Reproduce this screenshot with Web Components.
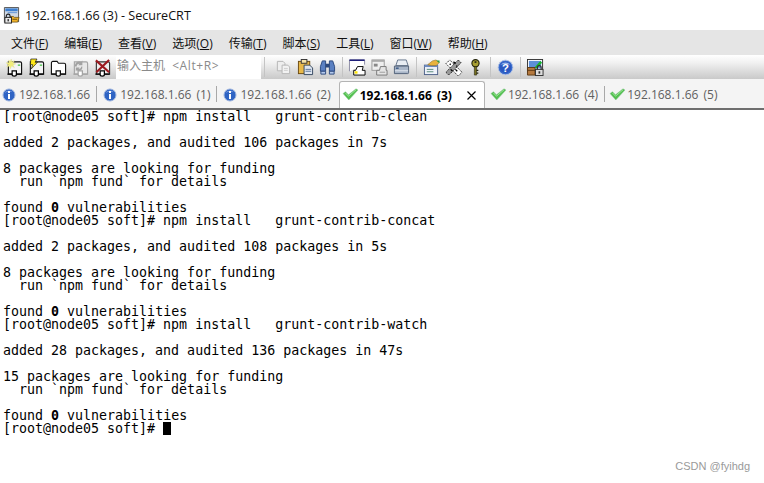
<!DOCTYPE html>
<html lang="zh">
<head>
<meta charset="utf-8">
<title>192.168.1.66 (3) - SecureCRT</title>
<style>
    html, body { margin: 0; padding: 0; height: 100%; background: #fff; overflow: hidden; }
    body { display: flex; flex-direction: column; font-family: "Open Sans", "Noto Sans CJK SC", sans-serif; }
</style>
</head>
<body>
<crt-titlebar>192.168.1.66 (3) - SecureCRT</crt-titlebar>
<crt-menubar></crt-menubar>
<crt-toolbar></crt-toolbar>
<crt-tabbar></crt-tabbar>
<crt-terminal></crt-terminal>
<crt-watermark>CSDN @fyihdg</crt-watermark>

<script>
/**
 * Icon drawings, all on an 18x18 box
 */
const plug = (c = '#000') => `<path d="M1.500 16h15" stroke="${c}" stroke-width="1.300"/><path d="M6.500 12.500h4.500v4a2 1.500 0 0 1-4.500 0z" fill="#fff" stroke="${c}" stroke-width="1.300"/>`;
const body = (c = '#111', f = '#f4f4f4') => `<path d="M2.500 3h12.500a1.500 1.500 0 0 1 1.500 1.500v11.500h-14z" fill="${f}" stroke="${c}" stroke-width="1.200"/>`;
const Icons = {
    newSession: `${body()}${plug()}
        <path d="M5.500 0l.8 3 2.700-1.500L7.500 4.500l3 .6-3 1.200 1.500 3-3-1.800L4.500 10.500l-.7-3L.5 8.500l2-2.300L0 4l3.200-.2L2.500 1l2 1.500z" fill="#f2ee7a" stroke="#d8d6a0" stroke-width=".3"/>
        <path d="M12.500 6.500h2.500" stroke="#3fbf3f" stroke-width="1.300"/>`,
    quickConnect: `${body()}${plug()}
        <path d="M3 0h6.500L7.500 3.500H10L3.500 10.500l1.500-4.500H2.500z" fill="#ffe81a" stroke="#111" stroke-width=".7"/>
        <path d="M12.500 6.500h2.500" stroke="#3fbf3f" stroke-width="1.300"/>`,
    folder: `<path d="M1.500 16V4a1.500 1.500 0 0 1 1.500-1.500h4.500l1.500 2h6a1.500 1.500 0 0 1 1.500 1.500v10z" fill="#fff" stroke="#111" stroke-width="1.200"/>${plug('#111')}`,
    reconnect: `${body('#a4a4a4', '#e8e8e8')}${plug('#a4a4a4')}
        <path d="M3 8a5 5 0 0 1 7-5l1-1.500v5H6.500L8 5a3 3 0 0 0-3 3zM11 8a4 4 0 0 1-6 4l-1 1V9h4l-1 1.500a3 3 0 0 0 3-2.500z" fill="#a2a2a2"/>`,
    disconnect: `${body('#333', '#eee')}${plug()}
        <path d="M2 1.500l14 12.500M16 1L2.500 14" stroke="#9c1a20" stroke-width="2.300"/>`,
    copy: `<path d="M2.500 2.500h6l2 2v8h-8z" fill="#eee" stroke="#b5b5b5"/><path d="M7.500 6.500h6l2 2v7h-8z" fill="#f2f2f2" stroke="#b5b5b5"/>
        <path d="M9.500 10h4M9.500 12h4" stroke="#ccc"/>`,
    paste: `<rect x="1.500" y="2.500" width="12" height="13" fill="#e9b949" stroke="#6b4a10"/><rect x="4.500" y=".5" width="6" height="4" fill="#f6e4a8" stroke="#333"/>
        <path d="M7.500 6.500h6l3 3v7h-9z" fill="#dfe6f0" stroke="#33465f"/><path d="M9 11h6M9 13h6" stroke="#5a7599"/>`,
    find: `<path d="M3.500 2h3.500v11H1.500v-5z" fill="#5a80c2" stroke="#2b477c"/><path d="M14.500 2H11v11h5.500V8z" fill="#5a80c2" stroke="#2b477c"/>
        <rect x="7" y="5" width="4" height="4" fill="#2b477c"/><path d="M2 13h5v3H2zM11 13h5v3h-5z" fill="#b4c9ec" stroke="#2b477c"/>`,
    printSetup: `<path d="M.5 13V1h16v5" fill="#fff" stroke="#8a8aa4"/><rect x=".5" y=".5" width="16" height="1.600" fill="#1c1c78"/>
        <path d="M5 12h2l2-4h6l-1 4h3v5H5z" fill="#fff" stroke="#000"/><rect x="6" y="13" width="3" height="2.500" fill="#ffe600"/>`,
    print2: `<rect x="1" y="1" width="13" height="11" fill="#eee" stroke="#999"/><rect x="1" y="1" width="13" height="2" fill="#aaa"/>
        <path d="M3 5h4v3H3z" fill="#888"/><path d="M6 12h3l1-4h6v4h1v5H6z" fill="#e5e5e5" stroke="#777"/><path d="M9 14h6" stroke="#999"/>`,
    printer: `<path d="M5 1h9l2 6H3z" fill="#e8edf3" stroke="#64748a"/><path d="M1.500 7.500h15v7a1 1 0 0 1-1 1h-14z" fill="#a9b6c8" stroke="#4f5f76"/>
        <path d="M2 12.500h14" stroke="#e6ebf2"/><rect x="3" y="9" width="3" height="1.500" fill="#3c5a85"/>`,
    options: `<rect x="1.500" y="6.500" width="14" height="10" fill="#eef2fa" stroke="#4c6088"/><rect x="1.500" y="6.500" width="14" height="2" fill="#6d8bc0"/>
        <path d="M4 11h7M4 13.500h7" stroke="#587"/><path d="M5 6l5-4 4-1 3 3-3 3h-5z" fill="#e8b23c" stroke="#8c6a1c" stroke-width=".6"/><path d="M14 1.500h3.500v3z" fill="#2b9b3b"/>`,
    script: `<path d="M1 5L5 1l13 13-4 4z" fill="#fff" stroke="#222" stroke-dasharray="1.500 1"/><path d="M17 4l-3-3L1 14l3 3z" fill="#999" stroke="#111" stroke-dasharray="1.500 1"/>
        <path d="M5 5l1 1M9 3l2 2M12 7l1 1M6 11l2 2M11 11l2 2" stroke="#000" stroke-width="1.400"/>`,
    key: `<circle cx="9" cy="4.500" r="3.800" fill="#a9a032" stroke="#24240c" stroke-width="1.200"/><rect x="8" y="2.500" width="2" height="1.500" fill="#111"/>
        <path d="M7.800 8h2.400v9H7.800z" fill="#77701f" stroke="#24240c" stroke-width=".6"/><path d="M10 12h2M10 15h2" stroke="#24240c" stroke-width="1.300"/>`,
    help: `<circle cx="9" cy="9" r="7.800" fill="#3a6bcc" stroke="#b4c4e4"/><circle cx="9" cy="9" r="6" fill="#2a58c0"/><path d="M4 6a6 5 0 0 1 10 0c-3-1-7-1-10 0z" fill="#9db8ea"/>
        <text x="9" y="13.500" text-anchor="middle" font-family="Liberation Sans" font-weight="700" font-size="12" fill="#fff">?</text>`,
    keymap: `<rect x=".5" y=".5" width="16" height="13" fill="#fff" stroke="#333"/><rect x="2" y="2" width="13" height="8" fill="#5d8fd8"/>
        <path d="M8 9l6-7 2 2-6 6z" fill="#18b52a"/><path d="M.5 9h8v8h-8z" fill="#b5793e" stroke="#5b3814"/><path d="M.5 12h8" stroke="#5b3814"/>
        <rect x="9" y="11" width="8" height="6.500" fill="#ddd" stroke="#333"/><path d="M11 11V9a2 2 0 0 1 4 0v2" fill="none" stroke="#333" stroke-width="1.300"/><rect x="12.200" y="13" width="1.800" height="2.500" fill="#333"/>`,
    appWindow: `<path d="M1.500 16.500V.5h15v15.500" fill="#cfd8e4" stroke="#555"/><rect x="2.500" y="1.500" width="13" height="3" fill="#3d7fd0"/><rect x="5" y="5.500" width="10" height="1" fill="#5f93d8"/>
        <path d="M8 10h3l1 1h5l-1.500 5H8z" fill="#f0b22a" stroke="#6a5010" stroke-width=".8"/><path d="M10 13h5" stroke="#6a5010"/>
        <path d="M3.500 11V9.500a2 2 0 0 1 4 0V11" fill="none" stroke="#222" stroke-width="1.200"/><rect x="2" y="11" width="7" height="6" fill="#e8e8e8" stroke="#222"/><rect x="4.800" y="12.800" width="1.400" height="2.400" fill="#222"/>`,
    check: `<path d="M0 5.500l2.500-1.800 3 3L13 .8l2 1.200-9.200 10z" fill="#52c04e" stroke="#8cc296" stroke-width=".5"/><path d="M2.500 5l3 3.200L13 1.800" fill="none" stroke="#a4e6a0" stroke-width=".9"/>`,
    info: `<circle cx="7" cy="7" r="6" fill="#2f64c4" stroke="#9cb3dd"/><path d="M2.500 5a5 4 0 0 1 8 -1c-3-1-6-.500-8 1z" fill="#8aa9e6"/><rect x="6" y="3" width="2" height="2" fill="#fff"/><rect x="6" y="6" width="2" height="5" fill="#fff"/>`,
};

/**
 * Title bar
 */
class CrtTitlebar extends HTMLElement {
    constructor() {
        super();
        const shadowRoot = this.attachShadow({ mode: 'open' });
        shadowRoot.innerHTML = `
            <style>
                :host { display: flex; align-items: center; height: 30px; background: #fff; flex: none; padding-left: 3px; gap: 5px; color: #111; font: 12.6px "Open Sans", sans-serif; }
                svg { width: 17px; height: 17px; flex: none; }
            </style>
            <svg viewBox="0 0 18 18">${Icons.appWindow}</svg>
            <slot></slot>
        `;
    }
}
customElements.define('crt-titlebar', CrtTitlebar);

/**
 * Menu bar
 */
class CrtMenubar extends HTMLElement {
    constructor() {
        super();
        const items = [['文件', 'F'], ['编辑', 'E'], ['查看', 'V'], ['选项', 'O'], ['传输', 'T'], ['脚本', 'S'], ['工具', 'L'], ['窗口', 'W'], ['帮助', 'H']];
        const shadowRoot = this.attachShadow({ mode: 'open' });
        shadowRoot.innerHTML = `
            <style>
                :host { display: flex; align-items: center; height: 25px; flex: none; padding-left: 3px; background: #e5e5e5; color: #111;
                    font: 12px "Open Sans", "Noto Sans CJK SC", sans-serif; }
                span { padding: 0 8px; white-space: nowrap; }
                u { text-underline-offset: 1px; }
            </style>
            ${items.map(([t, k]) => `<span>${t}(<u>${k}</u>)</span>`).join('')}
        `;
    }
}
customElements.define('crt-menubar', CrtMenubar);

/**
 * Toolbar button
 */
class ToolIcon extends HTMLElement {
    constructor() {
        super();
        const shadowRoot = this.attachShadow({ mode: 'open' });
        shadowRoot.innerHTML = `
            <style>
                :host { display: flex; align-items: center; justify-content: center; width: 22px; height: 24px; flex: none; }
                svg { width: 17px; height: 17px; overflow: visible; }
            </style>
            <svg viewBox="0 0 18 18">${Icons[this.getAttribute('icon')]}</svg>
        `;
    }
}
customElements.define('tool-icon', ToolIcon);

/**
 * Toolbar
 */
class CrtToolbar extends HTMLElement {
    constructor() {
        super();
        const icons = (names) => names.map((n) => `<tool-icon icon="${n}"></tool-icon>`).join('');
        const shadowRoot = this.attachShadow({ mode: 'open' });
        shadowRoot.innerHTML = `
            <style>
                :host { display: flex; align-items: stretch; height: 24px; flex: none; padding-left: 3px; background: linear-gradient(#fff, #f2f2f2 30%, #c9c9c9); }
                .host { width: 145px; margin-left: 3px; background: #fff; color: #8a8a8a; font: 12px "Open Sans", "Noto Sans CJK SC", sans-serif; line-height: 21px; padding-left: 1px; box-sizing: border-box; white-space: pre; flex: none; }
                .host span { letter-spacing: .6px; margin-left: 4px; }
                .sep { width: 1px; margin: 2px 9px 2px 3px; background: #c4c4c4; flex: none; }
                .sep.a { margin-left: 3px; margin-right: 7px; }
                .sep.b { margin: 2px 3px 2px 4px; }
            </style>
            ${icons(['newSession', 'quickConnect', 'folder', 'reconnect', 'disconnect'])}
            <div class="host">输入主机 <span>&lt;Alt+R&gt;</span></div>
            <div class="sep a"></div>
            ${icons(['copy', 'paste', 'find'])}
            <div class="sep b"></div>
            ${icons(['printSetup', 'print2', 'printer'])}
            <div class="sep b"></div>
            ${icons(['options', 'script', 'key'])}
            <div class="sep b"></div>
            ${icons(['help'])}
            <div class="sep b"></div>
            ${icons(['keymap'])}
        `;
    }
}
customElements.define('crt-toolbar', CrtToolbar);

/**
 * Session tab
 */
class SessionTab extends HTMLElement {
    constructor() {
        super();
        const connected = this.hasAttribute('connected');
        const shadowRoot = this.attachShadow({ mode: 'open' });
        shadowRoot.innerHTML = `
            <style>
                :host { display: flex; align-items: center; flex: none; box-sizing: border-box; padding: 0 11px 0 2px; gap: 3px; color: #5f5f5f; position: relative; word-spacing: 2px; }
                :host([last]) { padding-right: 8px; }
                :host([connected]) { padding-right: 10px; }
                :host([active]) { background: #fff; color: #000; font-weight: 700; border: 1px solid #b4b4b4; border-bottom: 0; border-radius: 3px 3px 0 0; margin: 0 4px 0 0; padding: 0 8px 0 3px; }
                :host([sep])::after { content: ""; position: absolute; right: 4px; top: 5px; bottom: 6px; width: 1px; background: #a8a8a8; }
                :host([connected][sep])::after { right: 3px; }
                svg { width: 14px; height: 14px; flex: none; overflow: visible; }
                .x { display: none; width: 9px; height: 9px; margin-left: 12px; }
                :host([active]) .x { display: block; }
            </style>
            <svg viewBox="0 0 14 14">${connected ? Icons.check : Icons.info}</svg>
            <slot></slot>
            <svg class="x" viewBox="0 0 9 9"><path d="M.5.5l8 8M8.500.5l-8 8" stroke="#000" stroke-width="1.200"/></svg>
        `;
    }
}
customElements.define('session-tab', SessionTab);

/**
 * Tab bar
 */
class CrtTabbar extends HTMLElement {
    constructor() {
        super();
        const shadowRoot = this.attachShadow({ mode: 'open' });
        shadowRoot.innerHTML = `
            <style>
                :host { display: flex; align-items: stretch; height: 31px; flex: none; box-sizing: border-box; padding: 2px 0 0 0; background: #f4f4f4; border-bottom: 2px solid #6e6e6e; font: 12px "Open Sans", sans-serif; }
            </style>
            <session-tab sep>192.168.1.66</session-tab>
            <session-tab sep>192.168.1.66 (1)</session-tab>
            <session-tab last>192.168.1.66 (2)</session-tab>
            <session-tab connected active>192.168.1.66 (3)</session-tab>
            <session-tab connected sep>192.168.1.66 (4)</session-tab>
            <session-tab connected>192.168.1.66 (5)</session-tab>
        `;
    }
}
customElements.define('crt-tabbar', CrtTabbar);

/**
 * Terminal output
 */
class CrtTerminal extends HTMLElement {
    constructor() {
        super();
        const run = (pkg, count, total, time, funding) => [
            `[root@node05 soft]# npm install   grunt-contrib-${pkg}`,
            '',
            `added ${count} packages, and audited ${total} packages in ${time}`,
            '',
            `${funding} packages are looking for funding`,
            '  run \`npm fund\` for details',
            '',
            'found <b>0</b> vulnerabilities',
        ];
        const lines = [
            ...run('clean', 2, 106, '7s', 8),
            ...run('concat', 2, 108, '5s', 8),
            ...run('watch', 28, 136, '47s', 15),
            '[root@node05 soft]# <i></i>',
        ];
        const shadowRoot = this.attachShadow({ mode: 'open' });
        shadowRoot.innerHTML = `
            <style>
                :host { display: block; flex: 1; background: #fff; color: #000; padding-left: 3px; font: 13.3px/13px "DejaVu Sans Mono", "Liberation Mono", monospace; }
                div { height: 13px; white-space: pre; }
                i { display: inline-block; width: 8px; height: 13px; background: #000; vertical-align: top; }
            </style>
            ${lines.map((l) => `<div>${l}</div>`).join('')}
        `;
    }
}
customElements.define('crt-terminal', CrtTerminal);

/**
 * Watermark over the terminal
 */
class CrtWatermark extends HTMLElement {
    constructor() {
        super();
        const shadowRoot = this.attachShadow({ mode: 'open' });
        shadowRoot.innerHTML = `
            <style>
                :host { position: absolute; right: 14px; top: 460px; color: #9a9a9a; font: 11px "Liberation Sans", sans-serif; }
            </style>
            <slot></slot>
        `;
    }
}
customElements.define('crt-watermark', CrtWatermark);
</script>
</body>
</html>
